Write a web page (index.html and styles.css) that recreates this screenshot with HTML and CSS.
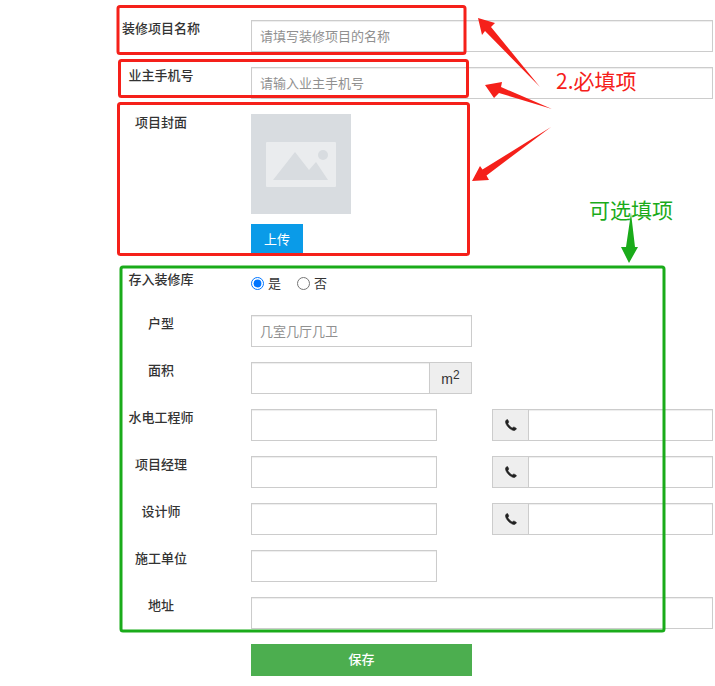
FILE: index.html
```html
<!DOCTYPE html>
<html lang="zh-CN">
<head>
<meta charset="utf-8">
<title>装修项目</title>
<link rel="stylesheet" href="styles.css">
</head>
<body>
<form class="form">
  <div class="row">
    <label class="label">装修项目名称</label>
    <input class="input input-full" placeholder="请填写装修项目的名称">
  </div>
  <div class="row">
    <label class="label">业主手机号</label>
    <input class="input input-full" placeholder="请输入业主手机号">
  </div>
  <div class="row">
    <label class="label">项目封面</label>
    <div class="cover">
      <svg class="cover-image" viewBox="0 0 100 100" width="100" height="100" aria-hidden="true">
        <rect width="100" height="100" fill="#d8dce0"/>
        <rect x="15" y="28" width="70" height="45" rx="1" fill="#eaecee"/>
        <path d="M22 66 L44 38 L58 56 L65 48 L77 66 Z" fill="#d8dce0"/>
        <circle cx="72" cy="41" r="5" fill="#d8dce0"/>
      </svg>
      <button type="button" class="upload">上传</button>
    </div>
  </div>
  <div class="row">
    <label class="label">存入装修库</label>
    <div class="radios">
      <label class="radio"><input type="radio" name="store" checked>是</label>
      <label class="radio"><input type="radio" name="store">否</label>
    </div>
  </div>
  <div class="row">
    <label class="label">户型</label>
    <input class="input input-wide" placeholder="几室几厅几卫">
  </div>
  <div class="row">
    <label class="label">面积</label>
    <div class="group input-wide">
      <input class="input group-input">
      <span class="addon addon-right">m<sup>2</sup></span>
    </div>
  </div>
  <div class="row">
    <label class="label">水电工程师</label>
    <input class="input input-half">
    <div class="group phone">
      <span class="addon addon-left"><svg class="icon" viewBox="0 0 12 12" width="12" height="12" aria-hidden="true"><path d="M0.7 1.9 C1 1.2 1.9 .5 2.4 .5 C2.7 .5 3.8 2.7 3.8 3 C3.8 3.5 2.9 3.9 2.9 4.4 C2.9 5.4 6.2 8.9 7.3 8.9 C7.8 8.9 8.3 8 8.8 8 C9.1 8 11.4 9.2 11.4 9.5 C11.4 10 10.6 11 9.9 11.3 C9 11.8 7.6 11.3 6.4 10.6 C3.9 9.2 1.7 6.8 .9 4.6 C.5 3.6 .3 2.7 .7 1.9 Z"/></svg></span>
      <input class="input group-input">
    </div>
  </div>
  <div class="row">
    <label class="label">项目经理</label>
    <input class="input input-half">
    <div class="group phone">
      <span class="addon addon-left"><svg class="icon" viewBox="0 0 12 12" width="12" height="12" aria-hidden="true"><path d="M0.7 1.9 C1 1.2 1.9 .5 2.4 .5 C2.7 .5 3.8 2.7 3.8 3 C3.8 3.5 2.9 3.9 2.9 4.4 C2.9 5.4 6.2 8.9 7.3 8.9 C7.8 8.9 8.3 8 8.8 8 C9.1 8 11.4 9.2 11.4 9.5 C11.4 10 10.6 11 9.9 11.3 C9 11.8 7.6 11.3 6.4 10.6 C3.9 9.2 1.7 6.8 .9 4.6 C.5 3.6 .3 2.7 .7 1.9 Z"/></svg></span>
      <input class="input group-input">
    </div>
  </div>
  <div class="row">
    <label class="label">设计师</label>
    <input class="input input-half">
    <div class="group phone">
      <span class="addon addon-left"><svg class="icon" viewBox="0 0 12 12" width="12" height="12" aria-hidden="true"><path d="M0.7 1.9 C1 1.2 1.9 .5 2.4 .5 C2.7 .5 3.8 2.7 3.8 3 C3.8 3.5 2.9 3.9 2.9 4.4 C2.9 5.4 6.2 8.9 7.3 8.9 C7.8 8.9 8.3 8 8.8 8 C9.1 8 11.4 9.2 11.4 9.5 C11.4 10 10.6 11 9.9 11.3 C9 11.8 7.6 11.3 6.4 10.6 C3.9 9.2 1.7 6.8 .9 4.6 C.5 3.6 .3 2.7 .7 1.9 Z"/></svg></span>
      <input class="input group-input">
    </div>
  </div>
  <div class="row">
    <label class="label">施工单位</label>
    <input class="input input-half">
  </div>
  <div class="row">
    <label class="label">地址</label>
    <input class="input input-full">
  </div>
  <div class="row">
    <span class="label"></span>
    <button type="button" class="save input-wide">保存</button>
  </div>
</form>

<svg class="markup" viewBox="0 0 715 686" width="715" height="686" aria-hidden="true">
  <g fill="none" stroke="#f5201a" stroke-width="3">
    <rect x="118" y="6.5" width="347" height="47" rx="2"/>
    <rect x="119.5" y="60.5" width="348" height="36" rx="2"/>
    <rect x="118.5" y="103.5" width="350" height="151" rx="2"/>
  </g>
  <rect x="121" y="267" width="543" height="364" rx="2" fill="none" stroke="#1aab1a" stroke-width="3"/>
  <g fill="#f5201a">
    <polygon points="478,18 495,23 491,27 540,87 485,31 482,35"/>
    <polygon points="485,85 502,82 501,87 552,109 499,93 494,98"/>
    <polygon points="472,181 480,166 482.5,169.5 551,127 486.5,175.5 489,180"/>
  </g>
  <polygon points="631,213 635,247 638,247 629,263 621,247 626,247" fill="#1aab1a"/>
</svg>
<div class="note note-required">2.必填项</div>
<div class="note note-optional">可选填项</div>
</body>
</html>
```
FILE: styles.css
```css
* { box-sizing: border-box; }

html, body { margin: 0; background: #fff; }

body {
  position: relative;
  font-family: "Noto Sans CJK SC", "Liberation Sans", sans-serif;
  font-size: 13px;
  color: #333;
}

.form {
  display: flex;
  flex-direction: column;
  gap: 15px;
  width: 592px;
  margin-left: 121px;
  padding: 20px 0 10px;
}

.row { display: flex; align-items: flex-start; }

.label {
  flex: none;
  width: 80px;
  margin-right: 50px;
  font-weight: 500;
  line-height: 16px;
  text-align: center;
}

.input {
  height: 32px;
  padding: 0 8px 2px;
  border: 1px solid #ccc;
  border-radius: 0;
  outline: 0;
  background: #fff;
  box-shadow: inset 0 1px 1px rgba(0, 0, 0, .075);
  font: inherit;
  color: #333;
}

.input::placeholder { color: #909090; opacity: 1; }

.input-full { width: 462px; }
.input-wide { width: 221px; }
.input-half { width: 186px; margin-right: 55px; }

.group { display: flex; height: 32px; }
.phone { width: 221px; }
.group-input { flex: 1; min-width: 0; }

.addon {
  display: flex;
  flex: none;
  align-items: center;
  justify-content: center;
  height: 32px;
  border: 1px solid #ccc;
  background: #eee;
}

.addon-right {
  width: 42px;
  border-left: 0;
  font-family: "Liberation Sans", sans-serif;
  font-size: 14px;
  padding-top: 2px;
}
.addon-left { width: 36px; border-right: 0; }
.addon sup { font-size: 12px; line-height: 0; margin-bottom: 9px; }

.icon { fill: #222; stroke: #222; stroke-width: .6; }

.cover { display: flex; flex-direction: column; align-items: flex-start; gap: 10px; }
.cover-image { display: block; }

.upload {
  width: 52px;
  height: 32px;
  padding: 0 0 3px;
  border: 0;
  background: #0a9be8;
  color: #fff;
  font: inherit;
}

.radios { display: flex; gap: 16px; height: 29px; padding-top: 3px; align-items: flex-start; }

.radio { display: flex; align-items: center; gap: 4px; line-height: 18px; }
.radio input { width: 13px; height: 13px; margin: 0; }

.save {
  height: 32px;
  padding: 0 0 3px;
  border: 0;
  background: #4cae4f;
  color: #fff;
  font: inherit;
  font-weight: 500;
}

.markup { position: absolute; top: 0; left: 0; pointer-events: none; }

.note { position: absolute; font-size: 21px; line-height: 30px; white-space: nowrap; }
.note-required { top: 65px; left: 556px; color: #f5201a; }
.note-optional { top: 194px; left: 589px; color: #1aab1a; }
```
